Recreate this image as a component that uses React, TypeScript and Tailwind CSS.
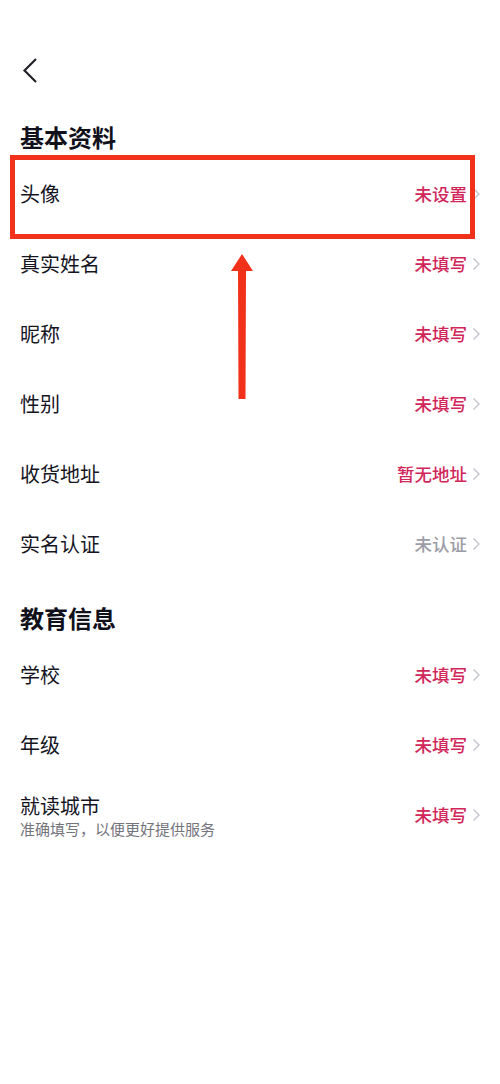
import React from "react";

interface Item {
  label: string;
  value: string;
  tone?: "red" | "gray";
  hint?: string;
}

const basic: Item[] = [
  { label: "头像", value: "未设置" },
  { label: "真实姓名", value: "未填写" },
  { label: "昵称", value: "未填写" },
  { label: "性别", value: "未填写" },
  { label: "收货地址", value: "暂无地址" },
  { label: "实名认证", value: "未认证", tone: "gray" },
];

const education: Item[] = [
  { label: "学校", value: "未填写" },
  { label: "年级", value: "未填写" },
  { label: "就读城市", value: "未填写", hint: "准确填写，以便更好提供服务" },
];

const Chevron = () => (
  <svg width="9" height="14" viewBox="0 0 9 14" className="ml-[5px] shrink-0">
    <path d="M1.5 1.5 L7 7 L1.5 12.5" fill="none" stroke="#c4c4cc" strokeWidth="1.4" />
  </svg>
);

const Row: React.FC<{ item: Item }> = ({ item }) => (
  <div className="flex h-[70px] items-center justify-between pr-[19px]">
    {item.hint ? (
      <div className="flex flex-col pt-[2px]">
        <span className="text-[20px] leading-[26px] text-[#15151f]">{item.label}</span>
        <span className="text-[15px] leading-[20px] text-[#74747c]">{item.hint}</span>
      </div>
    ) : (
      <span className="text-[20px] leading-[26px] text-[#15151f]">{item.label}</span>
    )}
    <div className="flex items-center">
      <span
        className={`text-[17.5px] leading-[24px] font-medium ${
          item.tone === "gray" ? "text-[#9c9ca6]" : "text-[#d1265a]"
        }`}
      >
        {item.value}
      </span>
      <Chevron />
    </div>
  </div>
);

const Section: React.FC<{ title: string; items: Item[]; className?: string }> = ({
  title,
  items,
  className,
}) => (
  <div className={className}>
    <h2 className="h-[38px] text-[24px] leading-[32px] font-bold text-[#11111b]">{title}</h2>
    {items.map((item) => (
      <Row key={item.label} item={item} />
    ))}
  </div>
);

export default function App() {
  return (
    <div
      className="relative min-h-[1084px] w-[500px] bg-white pl-5"
      style={{ fontFamily: '"Noto Sans CJK SC", "Noto Sans", sans-serif' }}
    >
      <div className="h-[121px] pt-[57px]">
        <svg width="18" height="27" viewBox="0 0 18 27" className="ml-[1px]">
          <path d="M15 2 L3.5 13.5 L15 25" fill="none" stroke="#22222a" strokeWidth="2.2" />
        </svg>
      </div>
      <Section title="基本资料" items={basic} />
      <Section title="教育信息" items={education} className="mt-[23px]" />

      {/* annotation overlay */}
      <div className="absolute left-[10px] top-[155px] h-[84px] w-[465px] border-[5px] border-[#f2311b]" />
      <svg
        className="absolute left-[229px] top-[252px]"
        width="26"
        height="150"
        viewBox="0 0 26 150"
      >
        <path d="M13 2 L24 19 L17 19 L16.5 147 L9.5 147 L9 19 L2 19 Z" fill="#f2311b" />
      </svg>
    </div>
  );
}
